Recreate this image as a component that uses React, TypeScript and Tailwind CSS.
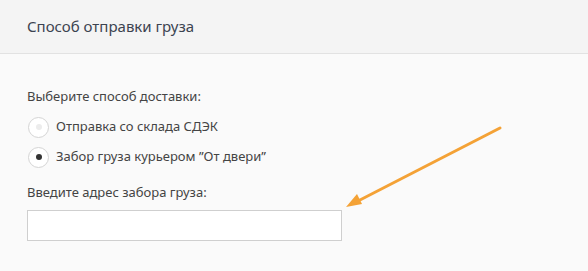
import React from "react";

function Radio({ checked, label }: { checked: boolean; label: string }) {
  return (
    <div className="flex h-[30px] items-center">
      <span className="ml-[1px] flex h-[21px] w-[21px] items-center justify-center rounded-full border border-[#d4d4d4] bg-white">
        <span
          className={
            checked
              ? "h-[6px] w-[6px] rounded-full bg-[#333]"
              : "h-[6px] w-[6px] rounded-full bg-[#ececec]"
          }
        />
      </span>
      <span className="ml-[7px] text-[13px] text-[#444]">{label}</span>
    </div>
  );
}

export default function App() {
  return (
    <div
      className="relative h-[271px] w-[588px] overflow-hidden bg-[#fafafa]"
      style={{ fontFamily: '"Noto Sans", "Open Sans", sans-serif' }}
    >
      <div className="flex h-[54px] items-center border-b border-[#e2e2e2] bg-[#f4f4f4] px-[27px]">
        <span className="text-[15px] text-[#3c4350]">Способ отправки груза</span>
      </div>
      <div className="px-[27px] pt-[32px]">
        <p className="text-[13px] leading-[20px] text-[#444]">Выберите способ доставки:</p>
        <div className="mt-[6px]">
          <Radio checked={false} label="Отправка со склада СДЭК" />
          <Radio checked={true} label={"Забор груза курьером \u201DОт двери\u201D"} />
        </div>
        <p className="mt-[10px] text-[13px] leading-[20px] text-[#444]">Введите адрес забора груза:</p>
        <input
          type="text"
          className="mt-[8px] block h-[31px] w-[315px] border border-[#cfcfcf] bg-white outline-none"
        />
      </div>
      <svg
        className="absolute left-0 top-0"
        width="588"
        height="271"
        viewBox="0 0 588 271"
      >
        <line x1="500" y1="128" x2="358" y2="201" stroke="#f4a236" strokeWidth="3" strokeLinecap="round" />
        <polygon points="346,207 357,194 362,204" fill="#f4a236" />
      </svg>
    </div>
  );
}
